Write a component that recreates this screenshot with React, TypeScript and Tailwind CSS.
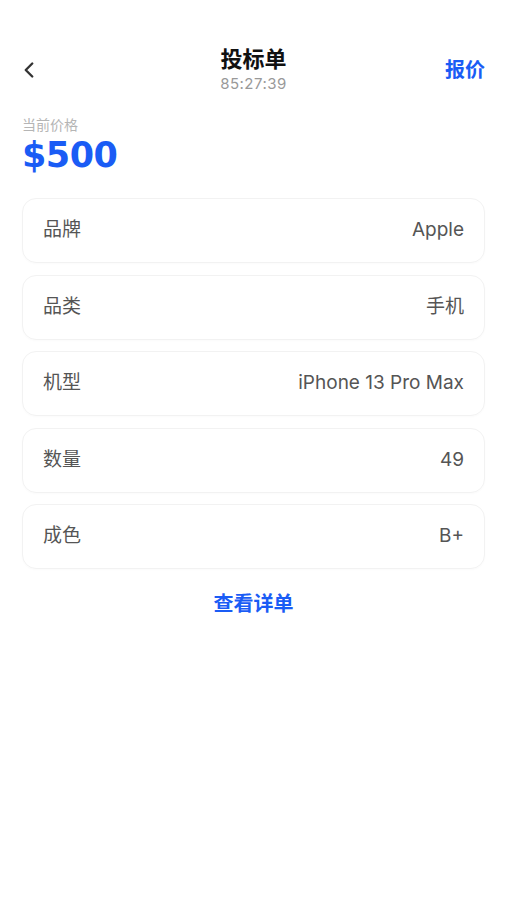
import { ChevronLeft } from 'lucide-react';

const rows = [
    { label: '品牌', value: 'Apple' },
    { label: '品类', value: '手机' },
    { label: '机型', value: 'iPhone 13 Pro Max' },
    { label: '数量', value: '49' },
    { label: '成色', value: 'B+' },
];

const font = { fontFamily: 'Inter, "Noto Sans CJK SC", sans-serif' };

export default function App() {
    return (
        <div className="min-h-[900px] w-full bg-white" style={font}>
            {/* Header */}
            <div className="grid grid-cols-[1fr_auto_1fr] items-center px-[22px] pt-[45px]">
                <button type="button" className="-ml-[6px] flex h-[40px] w-[40px] items-center text-[#333]">
                    <ChevronLeft size={26} strokeWidth={2.2} />
                </button>
                <div className="flex flex-col items-center">
                    <span className="text-[22px] font-bold leading-[28px] text-[#111]">投标单</span>
                    <span className="mt-[1px] text-[15px] leading-[20px] tracking-[0.5px] text-[#999]">85:27:39</span>
                </div>
                <button type="button" className="justify-self-end text-[20px] font-bold text-[#1a5cf5]">
                    报价
                </button>
            </div>

            {/* Price */}
            <div className="px-[22px] pt-[22px]">
                <div className="text-[14px] leading-[18px] text-[#b5b5b5]">当前价格</div>
                <div
                    className="mt-[1px] text-[35px] font-black leading-[40px] tracking-[-0.5px] text-[#1a5cf5]"
                    style={{ fontFamily: '"DejaVu Sans", sans-serif' }}
                >
                    $500
                </div>
            </div>

            {/* Detail rows */}
            <div className="mt-[23px] flex flex-col gap-[11.5px] px-[22px]">
                {rows.map((row) => (
                    <div
                        key={row.label}
                        className="flex h-[65px] items-center justify-between rounded-[14px] border border-[#f2f2f2] px-[20px] shadow-[0_1px_2px_rgba(0,0,0,0.02)]"
                    >
                        <span className="text-[19px] text-[#555]">{row.label}</span>
                        <span className="text-[19px] text-[#555]">{row.value}</span>
                    </div>
                ))}
            </div>

            <div className="mt-[20px] flex justify-center">
                <button type="button" className="text-[20px] font-bold text-[#1a5cf5]">
                    查看详单
                </button>
            </div>
        </div>
    );
}
